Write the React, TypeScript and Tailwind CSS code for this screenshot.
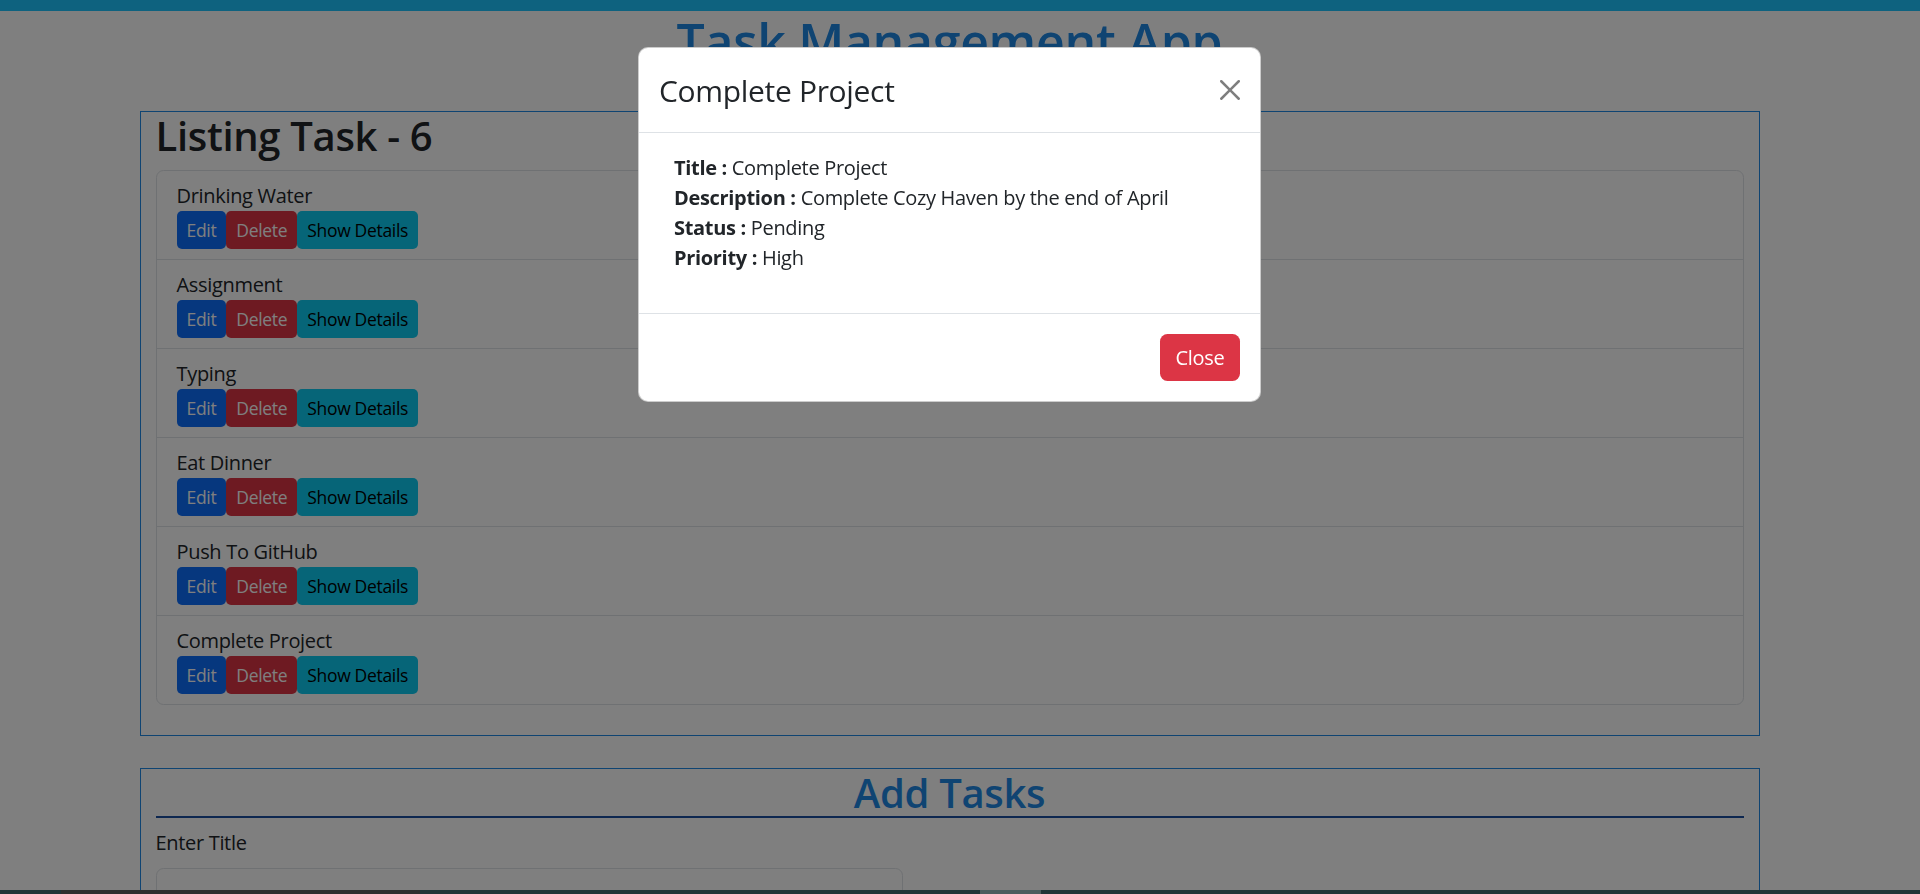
import clsx from 'clsx'

const tasks = ['Drinking Water', 'Assignment', 'Typing', 'Eat Dinner', 'Push To GitHub', 'Complete Project']

const details = [
  { label: 'Title', value: 'Complete Project' },
  { label: 'Description', value: 'Complete Cozy Haven by the end of April' },
  { label: 'Status', value: 'Pending' },
  { label: 'Priority', value: 'High' },
]

function TaskRow({ title, first }: { title: string; first: boolean }) {
  return (
    <li className={clsx('px-[20px] pt-[10px] pb-[10px]', !first && 'border-t border-[#dee2e6]')}>
      <div className="text-[20px] leading-[30px] text-[#212529]">{title}</div>
      <div className="flex">
        <button className="h-[38px] rounded-[5px] bg-[#0d6efd] px-[10px] text-[17.5px] leading-[26px] text-white">Edit</button>
        <button className="h-[38px] rounded-[5px] bg-[#dc3545] px-[10px] text-[17.5px] leading-[26px] text-white">Delete</button>
        <button className="h-[38px] rounded-[5px] bg-[#0dcaf0] px-[10px] text-[17.5px] leading-[26px] text-black">Show Details</button>
      </div>
    </li>
  )
}

function DetailsModal() {
  return (
    <div className="fixed inset-0 z-20 flex items-start justify-center pr-[21px] pt-[47px]">
      <div className="w-[623px] rounded-[10px] border border-black/20 bg-white">
        <div className="flex h-[85px] items-center justify-between border-b border-[#dee2e6] px-[20px]">
          <h4 className="text-[30px] font-medium leading-[45px] text-[#212529]">Complete Project</h4>
          <button className="flex h-[20px] w-[20px] items-center justify-center opacity-50">
            <svg viewBox="0 0 16 16" width="20" height="20" fill="#000">
              <path d="M.293.293a1 1 0 0 1 1.414 0L8 6.586 14.293.293a1 1 0 1 1 1.414 1.414L9.414 8l6.293 6.293a1 1 0 0 1-1.414 1.414L8 9.414l-6.293 6.293a1 1 0 0 1-1.414-1.414L6.586 8 .293 1.707a1 1 0 0 1 0-1.414z" />
            </svg>
          </button>
        </div>
        <div className="p-[20px]">
          <div className="mb-[20px] pl-[15px]">
            {details.map((d) => (
              <div key={d.label} className="text-[20px] leading-[30px] text-[#212529]">
                <b className="font-bold">{d.label} :</b> {d.value}
              </div>
            ))}
          </div>
        </div>
        <div className="flex justify-end border-t border-[#dee2e6] p-[15px]">
          <button className="m-[5px] h-[47px] w-[80px] rounded-[7.5px] bg-[#dc3545] text-[20px] text-white">Close</button>
        </div>
      </div>
    </div>
  )
}

export default function App() {
  return (
    <div
      className="relative h-screen overflow-hidden bg-white tracking-[-0.02em]"
      style={{ fontFamily: '"Open Sans", "Noto Sans", sans-serif' }}
    >
      <div className="h-[11px] bg-[#1cc4ff]" />
      <div className="pr-[21px]">
        <div className="mx-auto w-[1650px] px-[15px]">
          <h1 className="text-center text-[50px] font-semibold leading-[60px] text-[#1e88e5]">Task Management App</h1>

          <section className="mt-[40px] border border-[#1e88e5] px-[15px]">
            <h2 className="mb-[10px] text-[40px] font-semibold leading-[48px] text-[#212529]">Listing Task - {tasks.length}</h2>
            <ul className="mb-[30px] rounded-[7.5px] border border-[#dee2e6]">
              {tasks.map((t, i) => (
                <TaskRow key={t} title={t} first={i === 0} />
              ))}
            </ul>
          </section>

          <section className="mt-[32px] border border-[#1e88e5] px-[15px] pb-[30px]">
            <h2 className="mb-[10px] border-b-2 border-[#1a4fa0] text-center text-[40px] font-semibold leading-[47px] text-[#1e88e5]">Add Tasks</h2>
            <label className="mb-[10px] block text-[20px] leading-[30px] text-[#212529]">Enter Title</label>
            <input className="block h-[47px] w-[747px] rounded-[7.5px] border border-[#dee2e6] px-[15px]" />
            <label className="mb-[10px] mt-[20px] block text-[20px] leading-[30px] text-[#212529]">Enter Description</label>
            <input className="block h-[47px] w-[747px] rounded-[7.5px] border border-[#dee2e6] px-[15px]" />
          </section>
        </div>
      </div>

      <div className="fixed inset-0 z-10 bg-black/50" />
      <DetailsModal />

      <div className="fixed bottom-0 left-0 z-30 flex h-[4px] w-full">
        <div className="w-[61px] bg-[#213538]" />
        <div className="w-[359px] bg-[#2f2f2f]" />
        <div className="w-[560px] bg-[#213538]" />
        <div className="w-[61px] bg-[#4c5d5e]" />
        <div className="flex-1 bg-[#213538]" />
      </div>
    </div>
  )
}
